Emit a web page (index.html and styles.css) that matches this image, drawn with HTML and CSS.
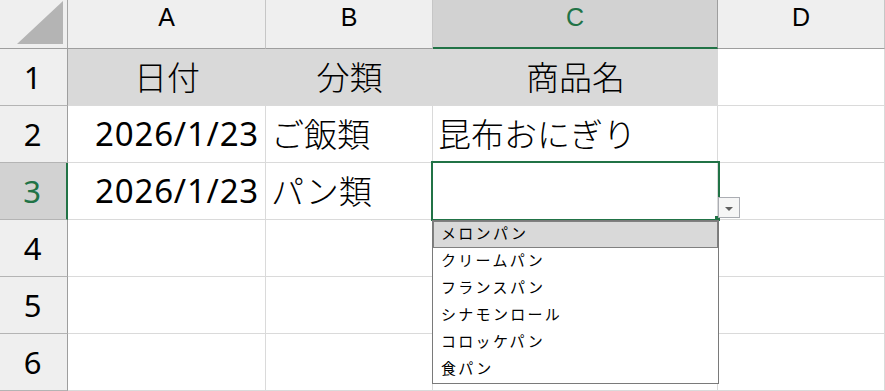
FILE: index.html
```html
<!DOCTYPE html>
<html lang="ja">
<head>
    <meta charset="UTF-8">
    <title>Sheet1</title>
    <link rel="stylesheet" href="styles.css">
</head>
<body>
    <div class="sheet">
        <!-- column headers -->
        <div class="corner">
            <svg width="68" height="48" viewBox="0 0 68 48"><polygon points="17,44 63,44 63,1" fill="#b4b4b4"/></svg>
        </div>
        <div class="col-head">A</div>
        <div class="col-head">B</div>
        <div class="col-head active">C</div>
        <div class="col-head">D</div>

        <!-- row 1 -->
        <div class="row-head">1</div>
        <div class="cell head-fill center">日付</div>
        <div class="cell head-fill center">分類</div>
        <div class="cell head-fill center">商品名</div>
        <div class="cell"></div>

        <!-- row 2 -->
        <div class="row-head">2</div>
        <div class="cell num">2026/1/23</div>
        <div class="cell">ご飯類</div>
        <div class="cell">昆布おにぎり</div>
        <div class="cell"></div>

        <!-- row 3 -->
        <div class="row-head active">3</div>
        <div class="cell num">2026/1/23</div>
        <div class="cell">パン類</div>
        <div class="cell current">
            <div class="selection"></div>
            <div class="handle"></div>
            <div class="drop-btn"><span class="arrow"></span></div>
            <ul class="drop-list">
                <li class="hover">メロンパン</li>
                <li>クリームパン</li>
                <li>フランスパン</li>
                <li>シナモンロール</li>
                <li>コロッケパン</li>
                <li>食パン</li>
            </ul>
        </div>
        <div class="cell"></div>

        <!-- rows 4-6 -->
        <div class="row-head">4</div>
        <div class="cell"></div>
        <div class="cell"></div>
        <div class="cell"></div>
        <div class="cell"></div>

        <div class="row-head">5</div>
        <div class="cell"></div>
        <div class="cell"></div>
        <div class="cell"></div>
        <div class="cell"></div>

        <div class="row-head">6</div>
        <div class="cell"></div>
        <div class="cell"></div>
        <div class="cell"></div>
        <div class="cell"></div>
    </div>
</body>
</html>
```

FILE: styles.css
```css
body {
    margin: 0;
    background: #ffffff;
    font-family: "Noto Sans", "Noto Sans CJK JP", sans-serif;
    overflow: hidden;
}

.sheet {
    display: grid;
    grid-template-columns: 68px 198px 167px 285px 167px;
    grid-template-rows: 49px repeat(6, 57px);
    width: 885px;
}

.corner,
.col-head,
.row-head,
.cell {
    box-sizing: border-box;
    border-right: 1px solid #dadada;
    border-bottom: 1px solid #dadada;
}

.corner {
    background: #efefef;
    border-right-color: #a6a6a6;
    border-bottom-color: #9e9e9e;
}

.corner svg {
    display: block;
}

.col-head {
    background: #efefef;
    border-right-color: #c6c6c6;
    border-bottom-color: #9e9e9e;
    text-align: center;
    font-family: "Liberation Sans", Arial, sans-serif;
    font-size: 25px;
    line-height: 32px;
    padding-top: 1px;
    color: #000;
}

.col-head.active {
    background: #d2d2d2;
    color: #217346;
    border-bottom: 2px solid #217346;
    border-right-color: #9e9e9e;
}

.row-head {
    background: #efefef;
    border-right-color: #9e9e9e;
    border-bottom-color: #b4b4b4;
    display: flex;
    align-items: center;
    justify-content: center;
    font-size: 31px;
    padding-right: 2px;
    color: #000;
}

.row-head.active {
    background: #d2d2d2;
    color: #217346;
    border-right: 2px solid #217346;
}

.cell {
    display: flex;
    align-items: center;
    padding: 0 4px 2px 5px;
    font-family: "Noto Sans CJK JP", sans-serif;
    font-size: 33px;
    font-weight: 300;
    color: #000;
    white-space: nowrap;
}

.cell.head-fill {
    background: #d9d9d9;
    border-right-color: #d9d9d9;
}

.cell.center {
    justify-content: center;
}

.cell.num {
    justify-content: flex-end;
    font-family: "Noto Sans", sans-serif;
    font-weight: 400;
    letter-spacing: 0.8px;
    padding-right: 6px;
}

.cell.current {
    position: relative;
}

.selection {
    position: absolute;
    left: -2px;
    top: -2px;
    width: 289px;
    height: 60px;
    box-sizing: border-box;
    border: 2px solid #217346;
    z-index: 2;
}

.handle {
    position: absolute;
    left: 282px;
    top: 53px;
    width: 5px;
    height: 5px;
    background: #217346;
    z-index: 3;
}

.drop-btn {
    position: absolute;
    left: 285px;
    top: 34px;
    width: 22px;
    height: 21px;
    box-sizing: border-box;
    border: 1px solid #abadb3;
    background: #f6f6f6;
    display: flex;
    align-items: center;
    justify-content: center;
    z-index: 3;
}

.arrow {
    width: 0;
    height: 0;
    border-left: 4px solid transparent;
    border-right: 4px solid transparent;
    border-top: 4px solid #606060;
    margin-top: 2px;
}

.drop-list {
    position: absolute;
    left: -1px;
    top: 57px;
    width: 287px;
    height: 164px;
    box-sizing: border-box;
    margin: 0;
    padding: 0;
    list-style: none;
    background: #ffffff;
    border: 1px solid #7a7a7a;
    z-index: 4;
}

.drop-list li {
    box-sizing: border-box;
    height: 27px;
    line-height: 22px;
    padding-left: 7px;
    font-family: "Noto Sans CJK JP", sans-serif;
    font-size: 15px;
    font-weight: 400;
    letter-spacing: 2.3px;
    color: #000;
    border: 1px solid transparent;
}

.drop-list li.hover {
    background: #d9d9d9;
    border-color: #808080;
}
```
